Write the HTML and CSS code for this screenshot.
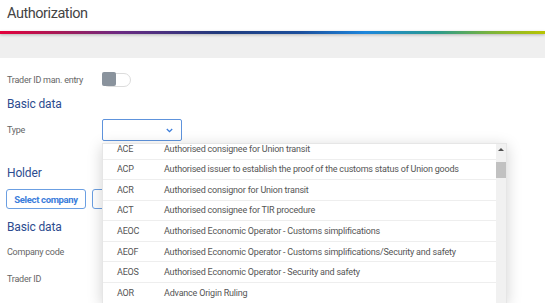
FILE: index.html
```html
<!DOCTYPE html>
<html lang="en">
<head>
    <meta charset="UTF-8">
    <title>Authorization</title>
    <link rel="stylesheet" href="styles.css">
</head>
<body>
    <div class="page-header">Authorization</div>
    <div class="rainbow"></div>
    <div class="toolbar"></div>

    <div class="content">
        <div class="field">
            <div class="field-label">Trader ID man. entry</div>
            <div class="toggle"><span class="toggle-knob"></span></div>
        </div>

        <h2 class="section-title">Basic data</h2>
        <div class="field field-type">
            <div class="field-label">Type</div>
            <div class="select-box">
                <svg width="7" height="5" viewBox="0 0 7 5" fill="none">
                    <path d="M0.8 1L3.5 3.7L6.2 1" stroke="#3b7ddb" stroke-width="1.3"/>
                </svg>
            </div>
        </div>

        <h2 class="section-title holder-title">Holder</h2>
        <div class="button-row">
            <button class="outline-button">Select company</button>
            <button class="outline-button">Select person</button>
        </div>

        <h2 class="section-title basic-title">Basic data</h2>
        <div class="field field-plain">
            <div class="field-label">Company code</div>
        </div>
        <div class="field field-plain">
            <div class="field-label">Trader ID</div>
        </div>
    </div>

    <!-- open dropdown of the Type select -->
    <div class="dropdown">
        <div class="option-list">
            <div class="option first"><span class="code">ACE</span><span>Authorised consignee for Union transit</span></div>
            <div class="option"><span class="code">ACP</span><span>Authorised issuer to establish the proof of the customs status of Union goods</span></div>
            <div class="option"><span class="code">ACR</span><span>Authorised consignor for Union transit</span></div>
            <div class="option"><span class="code">ACT</span><span>Authorised consignee for TIR procedure</span></div>
            <div class="option"><span class="code">AEOC</span><span>Authorised Economic Operator - Customs simplifications</span></div>
            <div class="option"><span class="code">AEOF</span><span>Authorised Economic Operator - Customs simplifications/Security and safety</span></div>
            <div class="option"><span class="code">AEOS</span><span>Authorised Economic Operator - Security and safety</span></div>
            <div class="option"><span class="code">AOR</span><span>Advance Origin Ruling</span></div>
        </div>
        <div class="scrollbar">
            <div class="scroll-up"></div>
            <div class="scroll-thumb"></div>
        </div>
    </div>
</body>
</html>
```

FILE: styles.css
```css
body {
    margin: 0;
    font-family: Roboto, 'Liberation Sans', sans-serif;
    background-color: #fff;
    color: #555;
    overflow: hidden;
}

.page-header {
    height: 31px;
    padding-left: 7px;
    font-size: 14.5px;
    letter-spacing: -0.45px;
    line-height: 27px;
    color: #444;
}

.rainbow {
    height: 3px;
    background: linear-gradient(to right, #e4003b 0%, #a01c5a 12%, #6b2a82 22%, #213a7c 40%, #1c4f9c 55%, #1d86dc 67%, #2a9a8e 80%, #7bb43c 90%, #b8c400 100%);
    position: relative;
    z-index: 1;
    box-shadow: 0 1px 3px rgba(0, 0, 0, 0.25);
}

.toolbar {
    height: 24px;
    background-color: #efefef;
}

.content {
    padding: 11px 6px 0 7px;
}

.field {
    display: flex;
    align-items: center;
    height: 22px;
}

.field-label {
    width: 95px;
    font-size: 9px;
    letter-spacing: -0.25px;
    color: #666;
}

.toggle {
    width: 27px;
    height: 12px;
    border: 1px solid #dcdcdc;
    border-radius: 7px;
    position: relative;
}

.toggle-knob {
    position: absolute;
    left: -1px;
    top: -2px;
    width: 14px;
    height: 14px;
    border-radius: 2px;
    background-color: #8a939d;
}

.section-title {
    margin: 3px 0 0 0;
    font-size: 12px;
    letter-spacing: -0.15px;
    font-weight: normal;
    line-height: 20px;
    color: #2d4c8f;
}

.field-type {
    margin-top: 5px;
}

.select-box {
    width: 70px;
    height: 20px;
    border: 1px solid #5e93dc;
    border-radius: 2px;
    display: flex;
    align-items: center;
    justify-content: flex-end;
    padding-right: 8px;
}

.holder-title {
    margin-top: 22px;
}

.button-row {
    display: flex;
    gap: 6px;
    margin-top: 6px;
    margin-left: -1px;
}

.outline-button {
    height: 20px;
    width: 80px;
    padding: 0;
    background: #fff;
    border: 1px solid #6b9fe2;
    border-radius: 3px;
    font-family: inherit;
    font-size: 9.5px;
    letter-spacing: -0.35px;
    font-weight: bold;
    color: #3b7ddb;
}

.basic-title {
    margin-top: 8px;
}

.field-plain {
    margin-top: 4px;
    height: 22px;
}

.field-plain + .field-plain {
    margin-top: 5px;
}

.dropdown {
    position: absolute;
    left: 102px;
    top: 143px;
    width: 405px;
    height: 160px;
    background: #fff;
    border: 1px solid #e6e6e6;
    border-bottom: none;
    box-sizing: border-box;
    box-shadow: 0 3px 14px rgba(0, 0, 0, 0.18);
    display: flex;
    overflow: hidden;
}

.option-list {
    flex: 1;
    overflow: hidden;
}

.option {
    display: flex;
    align-items: center;
    height: 20.57px;
    box-sizing: border-box;
    border-bottom: 1px solid #eeeeee;
    padding-left: 14px;
    font-size: 9px;
    letter-spacing: -0.2px;
    color: #555;
}

.option.first {
    margin-top: -5px;
}

.code {
    width: 47px;
}

.scrollbar {
    width: 10px;
    background: #f1f1f1;
}

.scroll-up {
    margin: 4px auto 0 auto;
    width: 0;
    height: 0;
    border-left: 3px solid transparent;
    border-right: 3px solid transparent;
    border-bottom: 3px solid #505050;
}

.scroll-thumb {
    margin-top: 11px;
    height: 16px;
    background: #c1c1c1;
}
```
